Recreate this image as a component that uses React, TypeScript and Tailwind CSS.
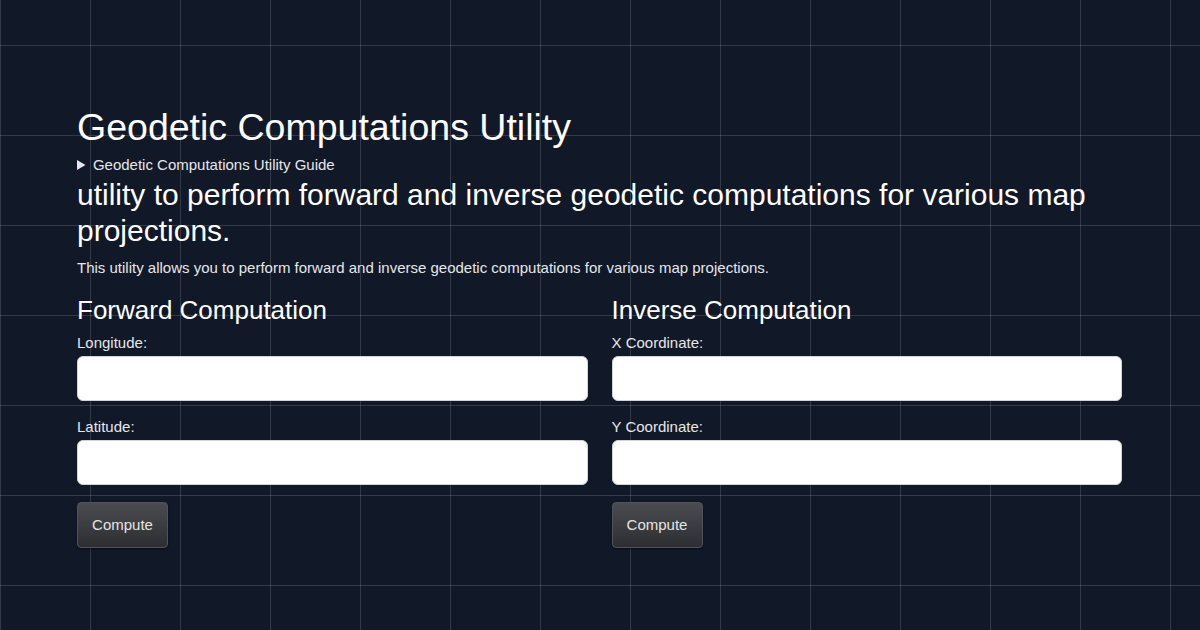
const font = "font-['Liberation_Sans',Arial,sans-serif]"

interface FieldProps {
  label: string
  first?: boolean
}

const Field = ({ label, first }: FieldProps) => (
  <div className={first ? "mt-[8px]" : "mt-[16px]"}>
    <label className="block text-[15px] leading-[20px] text-[#e5e7eb]">{label}</label>
    <input
      type="text"
      className="mt-[3px] block h-[45px] w-full rounded-[6px] border border-[#d1d5db] bg-white px-3 text-[15px] text-black outline-none"
    />
  </div>
)

interface PanelProps {
  title: string
  labels: string[]
}

const Panel = ({ title, labels }: PanelProps) => (
  <div>
    <h3 className="text-[26px] leading-[30px] text-white">{title}</h3>
    {labels.map((l, i) => (
      <Field key={l} label={l} first={i === 0} />
    ))}
    <button className="mt-[17px] h-[46px] w-[91px] rounded-[4px] border border-[#50535a] bg-[linear-gradient(to_bottom,#4a4c50,#2c2e32)] text-[15px] text-[#e5e5e5] shadow-[0_1px_2px_rgba(0,0,0,0.5)]">
      Compute
    </button>
  </div>
)

export default function App() {
  return (
    <div
      className={`${font} min-h-screen h-[630px] w-full overflow-hidden bg-[#111827] bg-[linear-gradient(rgba(255,255,255,0.14)_1px,transparent_1px),linear-gradient(90deg,rgba(255,255,255,0.14)_1px,transparent_1px)] bg-[size:90px_90px] bg-[position:0_45px]`}
    >
      <div className="px-[77px] pt-[105px]">
        <h1 className="text-[37.5px] leading-[44px] text-white">Geodetic Computations Utility</h1>
        <details className="mt-[6px] text-[15px] leading-[20px] text-[#e5e7eb]">
          <summary className="cursor-pointer">Geodetic Computations Utility Guide</summary>
        </details>
        <h2 className="mt-[2px] text-[30px] leading-[36px] text-white">
          utility to perform forward and inverse geodetic computations for various map projections.
        </h2>
        <p className="mt-[9px] text-[15px] leading-[20px] text-[#e5e7eb]">
          This utility allows you to perform forward and inverse geodetic computations for various map projections.
        </p>
        <div className="mt-[17px] grid grid-cols-2 gap-[24px] pr-[1px]">
          <Panel title="Forward Computation" labels={["Longitude:", "Latitude:"]} />
          <Panel title="Inverse Computation" labels={["X Coordinate:", "Y Coordinate:"]} />
        </div>
      </div>
    </div>
  )
}
